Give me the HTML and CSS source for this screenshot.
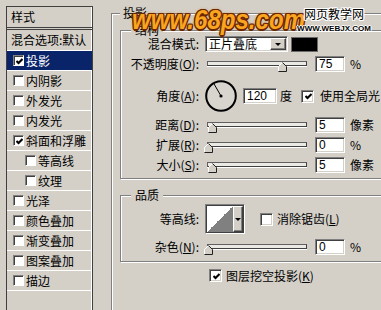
FILE: index.html
```html
<!DOCTYPE html>
<html lang="zh-CN">
<head>
<meta charset="utf-8">
<title>图层样式 - 投影</title>
<link rel="stylesheet" href="styles.css">
</head>
<body>
<div class="page">
  <div class="list">
    <div class="head">样式</div>
    <div class="item first">混合选项:默认</div>
    <div class="item sel"><span class="lcb"><svg class="chk" viewBox="0 0 7 7" width="7" height="7"><path d="M0.5 3 L2.5 5 L6.5 1" /></svg></span>投影</div>
    <div class="item"><span class="lcb"></span>内阴影</div>
    <div class="item"><span class="lcb"></span>外发光</div>
    <div class="item"><span class="lcb"></span>内发光</div>
    <div class="item"><span class="lcb"><svg class="chk" viewBox="0 0 7 7" width="7" height="7"><path d="M0.5 3 L2.5 5 L6.5 1" /></svg></span>斜面和浮雕</div>
    <div class="item sub"><span class="lcb"></span>等高线</div>
    <div class="item sub"><span class="lcb"></span>纹理</div>
    <div class="item"><span class="lcb"></span>光泽</div>
    <div class="item"><span class="lcb"></span>颜色叠加</div>
    <div class="item"><span class="lcb"></span>渐变叠加</div>
    <div class="item"><span class="lcb"></span>图案叠加</div>
    <div class="item"><span class="lcb"></span>描边</div>
    <div class="item"></div>
  </div>

  <fieldset class="grp outer">
    <legend>投影</legend>

    <fieldset class="grp inner">
      <legend>结构</legend>

      <div class="row r1">
        <span class="lab">混合模式:</span>
        <div class="select"><span class="sv">正片叠底</span><span class="btn"><i class="tri"></i></span></div>
        <div class="swatch"></div>
      </div>

      <div class="row r2">
        <span class="lab">不透明度(<u>O</u>):</span>
        <div class="slider"><div class="track"></div><svg class="thumb" style="left:71px" viewBox="0 0 9 10" width="9" height="10"><path class="tf" d="M0.5 9.5 V4.5 L4.5 0.5 L8.5 4.5 V9.5 Z"/><path class="tl" d="M0.5 9 V4.5 L4.5 0.5"/><path class="td" d="M4.5 0.5 L8.5 4.5 V9.5 H0.5"/></svg></div>
        <div class="field">75</div>
        <span class="unit">%</span>
      </div>

      <div class="row r3">
        <span class="lab">角度(<u>A</u>):</span>
        <svg class="dial" viewBox="0 0 32 32" width="32" height="32"><circle cx="16" cy="16" r="14.8" fill="#d8d5ce" stroke="#000" stroke-width="2"/><path d="M16 16 L9 3.9" stroke="#000" stroke-width="1"/><circle cx="16" cy="16" r="1.6" fill="#000"/></svg>
        <div class="field wide">120</div>
        <span class="deg">度</span>
        <span class="cb"><svg class="chk" viewBox="0 0 7 7" width="7" height="7"><path d="M0.5 3 L2.5 5 L6.5 1" /></svg></span>
        <span class="cbt">使用全局光</span>
      </div>

      <div class="row r4">
        <span class="lab">距离(<u>D</u>):</span>
        <div class="slider"><div class="track"></div><svg class="thumb" style="left:1px" viewBox="0 0 9 10" width="9" height="10"><path class="tf" d="M0.5 9.5 V4.5 L4.5 0.5 L8.5 4.5 V9.5 Z"/><path class="tl" d="M0.5 9 V4.5 L4.5 0.5"/><path class="td" d="M4.5 0.5 L8.5 4.5 V9.5 H0.5"/></svg></div>
        <div class="field">5</div>
        <span class="unit">像素</span>
      </div>

      <div class="row r5">
        <span class="lab">扩展(<u>R</u>):</span>
        <div class="slider"><div class="track"></div><svg class="thumb" style="left:-3px" viewBox="0 0 9 10" width="9" height="10"><path class="tf" d="M0.5 9.5 V4.5 L4.5 0.5 L8.5 4.5 V9.5 Z"/><path class="tl" d="M0.5 9 V4.5 L4.5 0.5"/><path class="td" d="M4.5 0.5 L8.5 4.5 V9.5 H0.5"/></svg></div>
        <div class="field">0</div>
        <span class="unit">%</span>
      </div>

      <div class="row r6">
        <span class="lab">大小(<u>S</u>):</span>
        <div class="slider"><div class="track"></div><svg class="thumb" style="left:1px" viewBox="0 0 9 10" width="9" height="10"><path class="tf" d="M0.5 9.5 V4.5 L4.5 0.5 L8.5 4.5 V9.5 Z"/><path class="tl" d="M0.5 9 V4.5 L4.5 0.5"/><path class="td" d="M4.5 0.5 L8.5 4.5 V9.5 H0.5"/></svg></div>
        <div class="field">5</div>
        <span class="unit">像素</span>
      </div>
    </fieldset>

    <fieldset class="grp inner q">
      <legend>品质</legend>
      <div class="row q1">
        <span class="lab">等高线:</span>
        <div class="contour"><span class="cpv"></span><span class="btn narrow"><i class="tri"></i></span></div>
        <span class="cb aa"></span>
        <span class="cbt">消除锯齿(<u>L</u>)</span>
      </div>
      <div class="row q2">
        <span class="lab">杂色(<u>N</u>):</span>
        <div class="slider"><div class="track"></div><svg class="thumb" style="left:-3px" viewBox="0 0 9 10" width="9" height="10"><path class="tf" d="M0.5 9.5 V4.5 L4.5 0.5 L8.5 4.5 V9.5 Z"/><path class="tl" d="M0.5 9 V4.5 L4.5 0.5"/><path class="td" d="M4.5 0.5 L8.5 4.5 V9.5 H0.5"/></svg></div>
        <div class="field">0</div>
        <span class="unit">%</span>
      </div>
    </fieldset>

    <div class="knock">
      <span class="cb"><svg class="chk" viewBox="0 0 7 7" width="7" height="7"><path d="M0.5 3 L2.5 5 L6.5 1" /></svg></span>
      <span class="cbt">图层挖空投影(<u>K</u>)</span>
    </div>
  </fieldset>

  <div class="wm">www.68ps.com</div>
  <div class="wm2"><span class="wm2a">网页教学网</span><span class="wm2b">WWW.WEBJX.COM</span></div>
</div>
</body>
</html>
```

FILE: styles.css
```css
* { box-sizing: border-box; }
html, body { margin: 0; padding: 0; }
body {
  background: #d4d0c8;
  color: #000;
  font-family: "Noto Sans CJK SC", "Liberation Sans", sans-serif;
  font-size: 12px;
  line-height: 14px;
}
u { text-decoration: underline; text-underline-offset: 1px; }

.page {
  position: relative;
  width: 381px;
  height: 310px;
  overflow: hidden;
  display: flex;
  align-items: flex-start;
  padding: 6px 0 0 6px;
}

/* ---------- style list ---------- */
.list {
  flex: none;
  width: 87px;
  height: 320px;
  border: 1px solid #404040;
  border-bottom: 0;
  box-shadow: inset -1px 0 #fff;
}
.head {
  height: 23px;
  line-height: 20px;
  padding-left: 4px;
  border-bottom: 3px double #404040;
}
.item {
  height: 20px;
  line-height: 19px;
  border-top: 1px solid #fff;
  display: flex;
  align-items: center;
  white-space: nowrap;
}
.item.first { border-top: 0; line-height: 20px; padding-left: 4px; }
.item.sel { background: #0a246a; color: #fff; }
.lcb {
  flex: none;
  width: 11px;
  height: 11px;
  margin: 0 2px 0 6px;
  background: #fff;
  border-top: 1px solid #808080;
  border-left: 1px solid #808080;
  border-right: 1px solid #fff;
  border-bottom: 1px solid #fff;
  box-shadow: inset 1px 1px #404040;
  display: flex;
  align-items: center;
  justify-content: center;
  padding: 1px 0 0 1px;
}
.item.sub .lcb { margin-left: 18px; }
.chk path { fill: none; stroke: #000; stroke-width: 2; }

/* ---------- group boxes ---------- */
.grp {
  margin: 0;
  border: 1px solid #808080;
  box-shadow: inset 1px 1px #fff, 1px 1px #fff;
  min-inline-size: 0;
}
.grp > legend {
  line-height: 12px;
  background: #d4d0c8;
}
.outer {
  flex: none;
  width: 300px;
  height: 330px;
  margin: 1px 0 0 18px;
  padding: 5px 0 0 8px;
}
.outer > legend { padding: 0 3px; }
.inner { padding: 0 0 5px 0; }
.inner > legend { margin-left: 10px; padding: 0 4px; }
.inner.q { margin-top: 10px; padding: 3px 0 6px 0; }

/* ---------- rows ---------- */
.row {
  display: flex;
  align-items: center;
  height: 16px;
  white-space: nowrap;
}
.lab { flex: none; width: 78px; text-align: right; }
.r2 { margin-top: 4px; }
.r3 { margin-top: 8px; height: 32px; }
.r4 { margin-top: 5px; }
.r5, .r6 { margin-top: 4px; }
.q1 { height: 30px; }
.q2 { margin-top: 5px; }

.select {
  flex: none;
  display: flex;
  align-items: center;
  width: 83px;
  height: 16px;
  margin-left: 6px;
  background: #fff;
  border-top: 1px solid #808080;
  border-left: 1px solid #808080;
  border-right: 1px solid #fff;
  border-bottom: 1px solid #fff;
  box-shadow: inset 1px 1px #404040, inset -1px -1px #d4d0c8;
  padding: 1px;
}
.sv { flex: 1; padding-left: 2px; line-height: 12px; }
.btn {
  flex: none;
  width: 16px;
  height: 12px;
  background: #d4d0c8;
  border-top: 1px solid #fff;
  border-left: 1px solid #fff;
  border-right: 1px solid #404040;
  border-bottom: 1px solid #404040;
  box-shadow: inset -1px -1px #808080;
  display: flex;
  align-items: center;
  justify-content: center;
}
.tri {
  display: block;
  width: 0;
  height: 0;
  border-left: 3px solid transparent;
  border-right: 3px solid transparent;
  border-top: 3px solid #000;
}
.swatch {
  flex: none;
  width: 27px;
  height: 15px;
  margin-left: 3px;
  background: #000;
  border: 1px solid #6a6a6a;
}

.slider {
  flex: none;
  position: relative;
  width: 100px;
  height: 16px;
  margin-left: 8px;
}
.track {
  margin-top: 5px;
  height: 5px;
  background: #ebe9e4;
  border-top: 1px solid #606060;
  border-left: 1px solid #606060;
  border-bottom: 1px solid #404040;
  border-right: 1px solid #404040;
  box-shadow: 0 1px #fff;
}
.thumb { position: absolute; top: 6px; }
.thumb .tf { fill: #d4d0c8; stroke: none; }
.thumb .tl { fill: none; stroke: #fff; stroke-width: 1; }
.thumb .td { fill: none; stroke: #202020; stroke-width: 1; }

.field {
  flex: none;
  width: 30px;
  height: 16px;
  margin-left: 8px;
  background: #fff;
  border-top: 1px solid #808080;
  border-left: 1px solid #808080;
  border-right: 1px solid #fff;
  border-bottom: 1px solid #fff;
  box-shadow: inset 1px 1px #404040, inset -1px -1px #d4d0c8;
  padding: 1px 0 0 3px;
  font-family: "Liberation Sans", sans-serif;
  font-size: 12px;
  line-height: 13px;
}
.field.wide { width: 34px; margin-left: 6px; }
.unit { margin-left: 5px; }
.deg { margin-left: 3px; }
.dial { flex: none; margin-left: 6px; }

.cb {
  flex: none;
  width: 13px;
  height: 13px;
  margin-left: 9px;
  background: #fff;
  border-top: 1px solid #808080;
  border-left: 1px solid #808080;
  border-right: 1px solid #fff;
  border-bottom: 1px solid #fff;
  box-shadow: inset 1px 1px #404040, inset -1px -1px #d4d0c8;
  display: flex;
  align-items: center;
  justify-content: center;
  padding: 1px 0 0 1px;
}
.cbt { margin-left: 6px; }
.cb.aa { margin-left: 15px; }
.aa + .cbt { margin-left: 4px; }

.contour {
  flex: none;
  display: flex;
  width: 40px;
  height: 30px;
  margin-left: 6px;
  border-top: 1px solid #808080;
  border-left: 1px solid #808080;
  border-right: 1px solid #fff;
  border-bottom: 1px solid #fff;
  padding: 1px;
  box-shadow: inset 1px 1px #404040;
  background: #404040;
}
.cpv {
  flex: 1;
  background: linear-gradient(to top left, #808080 50%, #fff 50%);
}
.btn.narrow { width: 10px; height: 100%; }

.knock {
  display: flex;
  align-items: center;
  height: 13px;
  margin-top: 7px;
  white-space: nowrap;
}
.knock .cb { margin-left: 89px; }
.knock .cbt { margin-left: 4px; }

/* ---------- watermarks ---------- */
.wm {
  position: absolute;
  left: 132px;
  top: 6px;
  font-family: "Liberation Sans", sans-serif;
  font-weight: bold;
  font-style: italic;
  font-size: 28px;
  line-height: 28px;
  color: #f9a51f;
  transform: scaleX(0.86);
  transform-origin: 0 0;
  text-shadow:
    1.5px 0 #6b2600, -1.5px 0 #6b2600, 0 1.5px #6b2600, 0 -1.5px #6b2600,
    1px 1px #6b2600, -1px -1px #6b2600, 1px -1px #6b2600, -1px 1px #6b2600,
    0 0 4px #d07010;
  white-space: nowrap;
}
.wm2 {
  position: absolute;
  left: 298px;
  top: 7px;
  display: flex;
  flex-direction: column;
  align-items: center;
  width: 72px;
}
.wm2a {
  font-size: 12px;
  line-height: 14px;
  letter-spacing: 0;
  text-shadow: 1px 0 #fff, -1px 0 #fff, 0 1px #fff, 0 -1px #fff, 1px 1px #fff, -1px -1px #fff, 1px -1px #fff, -1px 1px #fff;
}
.wm2b {
  margin-top: 3px;
  font-family: "Liberation Sans", sans-serif;
  font-weight: bold;
  font-size: 8px;
  line-height: 9px;
  text-shadow: 1px 0 #fff, -1px 0 #fff, 0 1px #fff, 0 -1px #fff;
}
```
